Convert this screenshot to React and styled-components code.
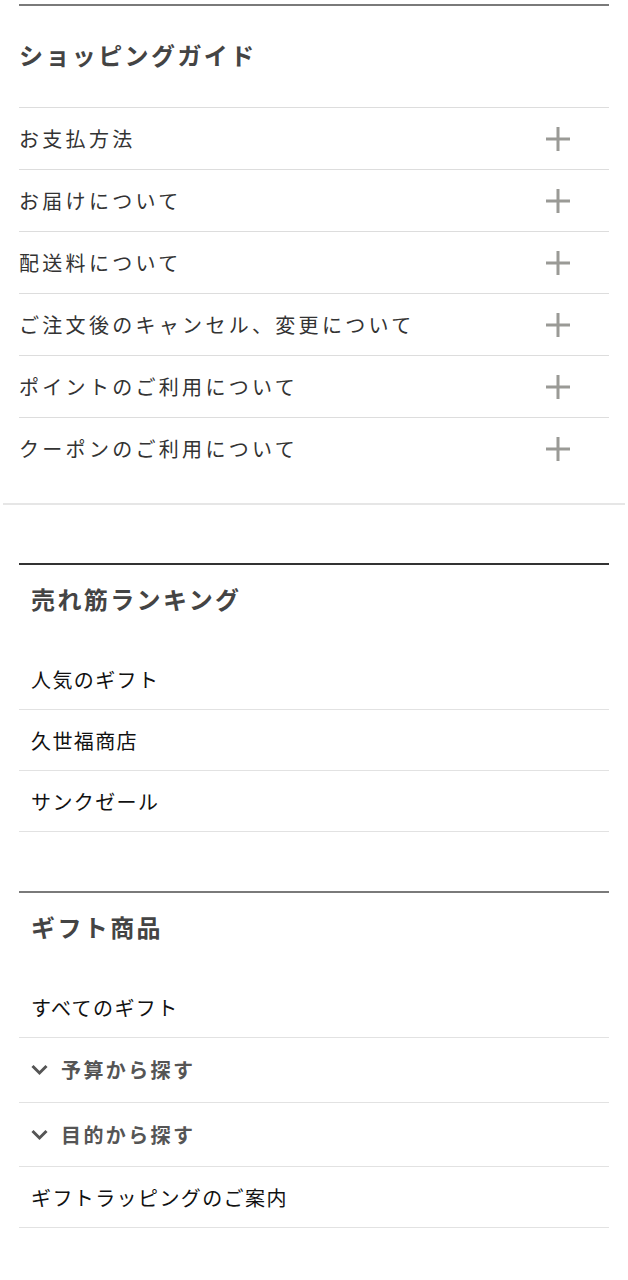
import React from "react";
import styled, { createGlobalStyle } from "styled-components";

const GlobalStyle = createGlobalStyle`
  body {
    margin: 0;
    background: #fff;
    font-family: "Noto Sans CJK JP", "Noto Sans", sans-serif;
  }
`;

const guideItems = [
  "お支払方法",
  "お届けについて",
  "配送料について",
  "ご注文後のキャンセル、変更について",
  "ポイントのご利用について",
  "クーポンのご利用について",
];

const rankingItems = ["人気のギフト", "久世福商店", "サンクゼール"];

const giftItems = [
  { label: "すべてのギフト" },
  { label: "予算から探す", toggle: true },
  { label: "目的から探す", toggle: true },
  { label: "ギフトラッピングのご案内" },
];

const PlusIcon = () => (
  <svg width="24" height="24" viewBox="0 0 24 24">
    <path d="M0 12h24M12 0v24" stroke="#9a9a96" strokeWidth="3" fill="none" />
  </svg>
);

const ChevronIcon = () => (
  <svg width="17" height="17" viewBox="0 0 17 17">
    <polyline
      points="1.5,5 8.5,12 15.5,5"
      stroke="#555"
      strokeWidth="3"
      fill="none"
      strokeLinejoin="miter"
    />
  </svg>
);

const App = () => {
  return (
    <>
      <GlobalStyle />
      <Page>
        <Guide>
          <GuideTitle>ショッピングガイド</GuideTitle>
          {guideItems.map((item) => (
            <GuideRow key={item}>
              <span>{item}</span>
              <PlusIcon />
            </GuideRow>
          ))}
        </Guide>

        <Divider />

        <MenuSection $gap={58} $line="#333">
          <MenuTitle>売れ筋ランキング</MenuTitle>
          {rankingItems.map((item) => (
            <MenuRow key={item}>{item}</MenuRow>
          ))}
        </MenuSection>

        <MenuSection $gap={59} $line="#7a7a7a">
          <MenuTitle>ギフト商品</MenuTitle>
          {giftItems.map((item) =>
            item.toggle ? (
              <ToggleRow key={item.label}>
                <ChevronIcon />
                <span>{item.label}</span>
              </ToggleRow>
            ) : (
              <MenuRow key={item.label}>{item.label}</MenuRow>
            )
          )}
        </MenuSection>
      </Page>
    </>
  );
};

// Style
const Page = styled.div`
  padding-top: 4px;
  padding-bottom: 50px;
`;

const Guide = styled.section`
  margin: 0 19px 24px;
  border-top: 2px solid #7a7a7a;
`;

const GuideTitle = styled.h2`
  margin: 0;
  padding: 35px 0 38px;
  font-size: 24px;
  line-height: 28px;
  font-weight: 700;
  letter-spacing: 2.4px;
  color: #444;
`;

const GuideRow = styled.div`
  display: flex;
  align-items: center;
  justify-content: space-between;
  height: 61px;
  padding-right: 39px;
  border-top: 1px solid #ddd;
  font-size: 20px;
  letter-spacing: 3.3px;
  color: #333;
`;

const Divider = styled.hr`
  margin: 0 3px;
  height: 2px;
  border: none;
  background: #e6e6e6;
`;

const MenuSection = styled.section`
  margin: ${(p) => p.$gap}px 19px 0;
  border-top: 2px solid ${(p) => p.$line};
`;

const MenuTitle = styled.h2`
  margin: 0;
  padding: 20px 12px 36px;
  font-size: 24px;
  line-height: 28px;
  font-weight: 700;
  letter-spacing: 2.4px;
  color: #444;
`;

const MenuRow = styled.div`
  display: flex;
  align-items: center;
  height: 60px;
  padding: 0 12px;
  border-bottom: 1px solid #e2e2e2;
  font-size: 20px;
  letter-spacing: 1.4px;
  color: #111;
`;

const ToggleRow = styled(MenuRow)`
  height: 63.5px;
  gap: 13px;
  font-weight: 700;
  letter-spacing: 2.4px;
  color: #555;
`;

export default App;
